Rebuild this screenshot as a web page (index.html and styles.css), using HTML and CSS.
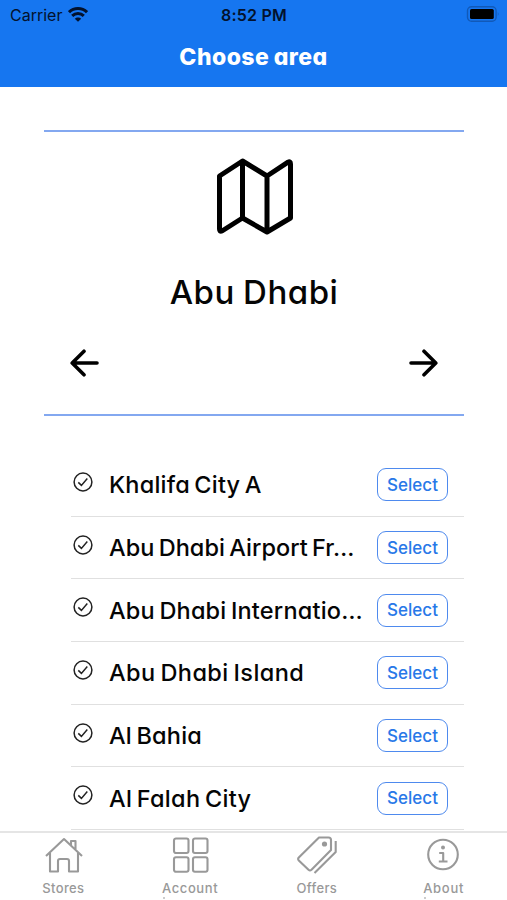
FILE: index.html
```html
<!DOCTYPE html>
<html lang="en">
<head>
<meta charset="utf-8">
<title>Choose area</title>
<link rel="stylesheet" href="styles.css">
</head>
<body>
<svg width="0" height="0" class="defs">
  <symbol id="check" viewBox="0 0 20 20">
    <circle cx="10" cy="10" r="8.9"/>
    <path d="M5.3 10.4L8.4 13.4L14.3 6.5"/>
  </symbol>
</svg>
<div class="screen">
  <header class="header">
    <div class="status">
      <div class="carrier"><span>Carrier</span>
        <svg width="20" height="15" viewBox="0 0 20 15" fill="none" stroke="#03122d" stroke-width="3"><path d="M1 5.2C6 .3 14 .3 19 5.2"/><path d="M4.2 8.8C7.5 5.6 12.5 5.6 15.8 8.8"/><path d="M10 14.8L6.8 11.8C8.5 10.1 11.5 10.1 13.2 11.8Z" fill="#03122d" stroke="none"/></svg>
      </div>
      <span class="time">8:52 PM</span>
      <svg class="battery" width="34" height="16" viewBox="0 0 34 16"><rect x="1.5" y=".7" width="28.6" height="14.6" rx="4" fill="none" stroke="#1159b8" stroke-width="1.4"/><rect x="4" y="3" width="23.8" height="10" rx="1.6" fill="#000"/><path d="M31.8 5.7Q33.5 8 31.8 10.3Z" fill="#1159b8"/></svg>
    </div>
    <h1>Choose area</h1>
  </header>
  <main>
    <section class="city">
      <svg class="map" width="78" height="78" viewBox="0 0 78 78"><path d="M3.5 18L26.5 3L51 18L72 4.2Q74.5 3 74.5 6V60L51 74L26.5 60L6 73Q3.5 74 3.5 71ZM26.5 3V60M51 18V74"/></svg>
      <h2>Abu Dhabi</h2>
      <div class="arrows">
        <svg width="30" height="28" viewBox="0 0 30 28"><path d="M28 14H3.5M15 2.2L3.2 14L15 25.8"/></svg>
        <svg width="30" height="28" viewBox="0 0 30 28"><path d="M2 14H26.5M15 2.2L26.8 14L15 25.8"/></svg>
      </div>
    </section>
    <ul class="areas">
      <li><svg class="tick"><use href="#check"/></svg><span class="name n1">Khalifa City A</span><button>Select</button></li>
      <li><svg class="tick"><use href="#check"/></svg><span class="name n2">Abu Dhabi Airport Fr…</span><button>Select</button></li>
      <li><svg class="tick"><use href="#check"/></svg><span class="name n3">Abu Dhabi Internatio…</span><button>Select</button></li>
      <li><svg class="tick"><use href="#check"/></svg><span class="name n4">Abu Dhabi Island</span><button>Select</button></li>
      <li><svg class="tick"><use href="#check"/></svg><span class="name n5">Al Bahia</span><button>Select</button></li>
      <li><svg class="tick"><use href="#check"/></svg><span class="name n6">Al Falah City</span><button>Select</button></li>
    </ul>
  </main>
  <nav class="tabs">
    <a class="tab"><svg viewBox="0 0 40 40"><path d="M2 20L20 3L38 20M6 17V35.5H14V25Q14 23 16 23H23Q25 23 25 25V35.5H34V17M27 9V5H31.5V13"/></svg><span class="t1">Stores</span></a>
    <a class="tab"><svg viewBox="0 0 40 40"><rect x="3" y="2.5" width="14.5" height="14.5" rx="2"/><rect x="22" y="2.5" width="14.5" height="14.5" rx="2"/><rect x="3" y="21.3" width="14.5" height="14.5" rx="2"/><rect x="22" y="21.3" width="14.5" height="14.5" rx="2"/></svg><span class="t2">Account</span><i class="overflow"></i></a>
    <a class="tab"><svg viewBox="0 0 40 40"><path d="M22 1.5H31.5Q34 1.5 34 4V14L14.5 33.8Q13 35 11.5 33.8L1.8 24.5Q.5 23 1.8 21.5ZM38.7 5V16L17.5 37"/><circle class="dot" cx="27.5" cy="8" r="2.6"/></svg><span class="t3">Offers</span></a>
    <a class="tab"><svg viewBox="0 0 40 40"><circle cx="19" cy="18.5" r="14.8"/><path d="M15.2 17H19.2V25.5M14.8 25.5H23.5"/><circle class="dot" cx="19" cy="11.5" r="2"/></svg><span class="t4">About</span><i class="overflow about"></i></a>
  </nav>
</div>
</body>
</html>
```
FILE: styles.css
```css
* { box-sizing: border-box; margin: 0; padding: 0; }
body {
  width: 507px; height: 900px; overflow: hidden; background: #fff; color: #050505;
  font-family: Inter, "Liberation Sans", sans-serif;
  font-feature-settings: "cv11";
}
.defs { position: absolute; }
.screen { height: 900px; display: flex; flex-direction: column; overflow: hidden; }
.header { height: 87px; flex: none; background: #1676f0; }
.status {
  height: 30px; padding: 0 7px 0 10px; display: grid; grid-template-columns: 1fr auto 1fr;
  align-items: center; color: #03122d; font-size: 16px; font-feature-settings: normal;
}
.carrier { display: flex; align-items: center; gap: 6px; }
.carrier svg { margin-top: -2px; }
.time { font-weight: 600; letter-spacing: .2px; margin-right: 2px; }
.battery { justify-self: end; margin-top: -2px; }
h1 { height: 54px; line-height: 55px; text-align: center; color: #fff; font-size: 23px; font-weight: 800; letter-spacing: .45px; word-spacing: -1px; white-space: nowrap; }
main { flex: 1; min-height: 0; overflow: hidden; }
.city {
  height: 286px; margin: 43px 43px 0 44px; border: solid #83a8f0; border-width: 2px 0;
  display: flex; flex-direction: column; align-items: center;
}
.map { margin-top: 26px; margin-left: 2px; fill: none; stroke: #000; stroke-width: 5; stroke-linejoin: round; }
h2 { margin-top: 30px; height: 52px; line-height: 52px; font-size: 33px; font-weight: 500; letter-spacing: .5px; word-spacing: -1px; white-space: nowrap; }
.arrows { align-self: stretch; display: flex; justify-content: space-between; margin: 31px 25px 0; }
.arrows svg { fill: none; stroke: #000; stroke-width: 3.6; stroke-linecap: round; stroke-linejoin: round; }
.areas { list-style: none; margin: 38px 43px 0 71px; }
.areas li { height: 62.7px; display: flex; align-items: center; border-bottom: 1.6px solid #e0e0e0; }
.tick { width: 20px; height: 20px; margin: -6px 17.5px 0 1.5px; flex: none; fill: none; stroke: #222; stroke-width: 1.5; }
.name { flex: 1; font-size: 23.5px; font-weight: 500; word-spacing: -2px; margin-left: -1px; white-space: nowrap; }
.n1, .n5 { letter-spacing: .2px; }
.n2 { letter-spacing: .03px; }
.n3 { letter-spacing: .2px; }
.n4 { letter-spacing: .45px; }
.n6 { letter-spacing: .3px; }
button {
  width: 71px; height: 33px; margin-right: 16px; flex: none; border: 1.5px solid #4e8aee; border-radius: 9px;
  background: #fff; color: #2878e8; font: 500 17px Inter, sans-serif; white-space: nowrap;
}
.tabs { height: 69px; flex: none; border-top: 2px solid #e5e5e5; background: #fff; display: grid; grid-template-columns: repeat(4, 1fr); }
.tab { position: relative; display: flex; flex-direction: column; align-items: center; color: #999; font-size: 13px; font-weight: 500; }
.tab svg { width: 40px; height: 40px; margin-top: 3px; margin-left: 1px; fill: none; stroke: #999; stroke-width: 2.1; stroke-linejoin: round; }
.tab .dot { fill: #999; stroke: none; }
.tab span { margin-top: 3px; line-height: 18px; }
.overflow { position: absolute; left: 36px; bottom: 1px; width: 2px; height: 2px; background: #ccc; }
.overflow.about { left: 44px; }
.t1, .t3 { letter-spacing: .35px; }
.t2 { letter-spacing: .6px; }
.t4 { letter-spacing: .7px; }
```
